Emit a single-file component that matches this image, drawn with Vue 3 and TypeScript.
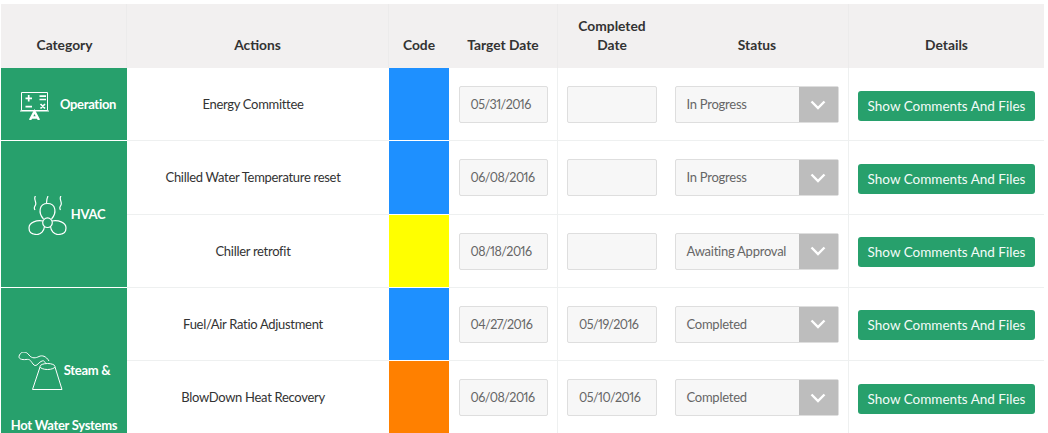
<script setup lang="ts">
interface Row {
  action: string
  color: string
  target: string
  completed: string
  status: string
  cat?: { label: string; span: number; icon: string }
}
const rows: Row[] = [
  { action: 'Energy Committee', color: '#1e90ff', target: '05/31/2016', completed: '', status: 'In Progress', cat: { label: 'Operation', span: 1, icon: 'board' } },
  { action: 'Chilled Water Temperature reset', color: '#1e90ff', target: '06/08/2016', completed: '', status: 'In Progress', cat: { label: 'HVAC', span: 2, icon: 'fan' } },
  { action: 'Chiller retrofit', color: '#ffff00', target: '08/18/2016', completed: '', status: 'Awaiting Approval' },
  { action: 'Fuel/Air Ratio Adjustment', color: '#1e90ff', target: '04/27/2016', completed: '05/19/2016', status: 'Completed', cat: { label: 'Steam &', span: 2, icon: 'steam' } },
  { action: 'BlowDown Heat Recovery', color: '#ff8000', target: '06/08/2016', completed: '05/10/2016', status: 'Completed' },
]
</script>

<template>
  <div class="page">
    <table class="grid">
      <colgroup>
        <col class="c1" /><col class="c2" /><col class="c3" /><col class="c4" /><col class="c5" /><col class="c6" /><col class="c7" />
      </colgroup>
      <thead>
        <tr>
          <th class="b">Category</th>
          <th class="b">Actions</th>
          <th>Code</th>
          <th class="b">Target Date</th>
          <th>Completed<br />Date</th>
          <th class="b">Status</th>
          <th>Details</th>
        </tr>
      </thead>
      <tbody>
        <tr v-for="r in rows" :key="r.action">
          <td v-if="r.cat" :rowspan="r.cat.span" class="cat">
            <div class="cat-in" :class="r.cat.icon">
              <svg v-if="r.cat.icon === 'board'" class="ic-board" viewBox="0 0 29 28" fill="none" stroke="#fff" stroke-width="1">
                <path d="M1.500 .500h26v18h-26zM0 19h29" />
                <path d="M10 28l4.500-8.500L19 28M11.500 25.500h6" stroke-width="2.400" />
                <path d="M5.500 6.300h6.500M8.700 3v6.600M5.500 14.700h6.500M19.500 4.200h6.500M19.500 7.500h6.500M20.500 12l4.500 4.500M25 12l-4.500 4.500" stroke-width="1.700" />
              </svg>
              <svg v-else-if="r.cat.icon === 'fan'" class="ic-fan" viewBox="-1 0 39 39" fill="none" stroke="#fff" stroke-width="1.200">
                <path d="M6.500 0C4 3 8 6 6.500 9S4.500 12 6 14M19 0c-1 2-1.500 4-1.500 7M32 0c-2.500 3 1.500 6 0 9s-2 3-.500 5" />
                <circle cx="18.500" cy="26.700" r="4.800" />
                <path d="M14.500 23C9 17 10 7.500 18.500 7.500S28 17 22.500 23" />
                <path d="M14 25C8 24 0 26 0 32c0 5 4 6.500 8 6.500 4 0 7-3.500 7.500-8M23 25c6-1 14 1 14 7 0 5-4 6.500-8 6.500-4 0-7-3.500-7.500-8" />
              </svg>
              <svg v-else class="ic-steam" viewBox="0 0 45 39" fill="none" stroke="#fff" stroke-width="1">
                <path d="M22 15 14.500 37.500h29.500L37 15" />
                <ellipse cx="29.500" cy="14.500" rx="7.500" ry="3" />
                <path d="M31 9C28 4 24 3 21 4.500S14 7 11 3 3.500-1 1.500 3 4 8 8 7.500 12 8 15 12 20 11 23 9.500 26 9 27.500 11" />
              </svg>
              <span class="cat-label">{{ r.cat.label }}</span>
              <span v-if="r.cat.icon === 'steam'" class="cat-label wide">Hot Water Systems</span>
            </div>
          </td>
          <td class="act">{{ r.action }}</td>
          <td class="code" :style="{ background: r.color }"></td>
          <td class="b"><div class="field f1">{{ r.target }}</div></td>
          <td><div class="field f2">{{ r.completed }}</div></td>
          <td class="b st">
            <div class="sel">
              <span class="sel-t">{{ r.status }}</span>
              <span class="sel-a">
                <svg viewBox="0 0 16 10" width="16" height="10" fill="none" stroke="#fff" stroke-width="2.400"><path d="M1.500 1.500 8 8l6.500-6.500" /></svg>
              </span>
            </div>
          </td>
          <td><button class="btn" type="button">Show Comments And Files</button></td>
        </tr>
      </tbody>
    </table>
  </div>
</template>

<style>
html, body { margin: 0; background: #fff; overflow: hidden; }
</style>

<style scoped>
.page {
  width: 1048px;
  height: 433px;
  overflow: hidden;
  padding: 4px 0 0 1px;
  box-sizing: border-box;
  font-family: "Lato", "Open Sans", sans-serif;
  font-variant-numeric: proportional-nums;
  font-feature-settings: "pnum" 1;
  font-size: 13px;
  letter-spacing: -0.3px;
}
.grid {
  table-layout: fixed;
  width: 1043px;
  border-collapse: separate;
  border-spacing: 0;
}
.c1 { width: 126px; }
.c2 { width: 262px; }
.c3 { width: 60px; }
.c4 { width: 109px; }
.c5 { width: 108px; }
.c6 { width: 183px; }
.c7 { width: 195px; }
th {
  height: 64px;
  box-sizing: border-box;
  padding: 0 0 14px;
  background: #f2f0f0;
  color: #333;
  font-size: 13.800px;
  letter-spacing: 0;
  line-height: 19px;
  font-weight: 700;
  text-align: center;
  vertical-align: bottom;
}
th.b { border-right: 1px solid #ecebeb; }
th:first-child { padding-left: 2px; }
td {
  height: 73.250px;
  box-sizing: border-box;
  padding: 0;
  border-bottom: 1px solid #eef0f0;
  text-align: center;
  vertical-align: middle;
}
td.b { border-right: 1px solid #eef0f0; }
td.st { padding-right: 1px; }
.cat {
  background: #27a06c;
  color: #fff;
  border-bottom: 1px solid #fff;
  font-weight: 700;
}
.code { border-bottom: 1px solid #fff; }
.act { color: #333; padding-right: 10px; }
.cat-in { display: flex; align-items: center; justify-content: center; }
.cat-in.board { gap: 11px; padding-left: 8px; }
.cat-in.board svg, .cat-in.fan svg { margin-top: 3px; }
.cat-in.fan { gap: 5px; padding-left: 6px; }
.cat-in.steam { flex-wrap: wrap; column-gap: 1px; row-gap: 26px; padding-top: 57px; margin-bottom: -6px; }
.steam .cat-label:not(.wide) { margin-top: -3px; }
.ic-board { width: 29px; height: 28px; }
.ic-fan { width: 39px; height: 39px; margin-left: -1px; margin-right: -1px; }
.ic-steam { width: 45px; height: 39px; }
.cat-label { white-space: nowrap; }
.wide { flex-basis: 100%; }
.field {
  box-sizing: border-box;
  height: 37px;
  margin: 1px auto 0;
  padding-left: 11px;
  background: #f7f7f7;
  border: 1px solid #dedede;
  border-radius: 2px;
  color: #666;
  font-size: 12.500px;
  letter-spacing: -0.55px;
  line-height: 35px;
  text-align: left;
}
.f1 { width: 89px; }
.f2 { width: 90px; }
.sel {
  box-sizing: border-box;
  display: flex;
  width: 164px;
  height: 37px;
  margin: 1px auto 0;
  background: #f7f7f7;
  border: 1px solid #dedede;
  border-radius: 2px;
  color: #666;
  text-align: left;
  letter-spacing: -0.25px;
}
.sel-t { flex: 1; padding-left: 11px; line-height: 35px; white-space: nowrap; }
.sel-a {
  width: 39px;
  background: #bdbdbd;
  display: flex;
  align-items: center;
  justify-content: center;
}
.btn {
  display: block;
  width: 177px;
  height: 30px;
  margin: 3px auto 0;
  padding: 0;
  border: 0;
  border-radius: 3px;
  background: #27a06c;
  color: #f4fbf8;
  font-family: inherit;
  font-size: 13.500px;
  letter-spacing: 0;
  white-space: nowrap;
}
</style>
